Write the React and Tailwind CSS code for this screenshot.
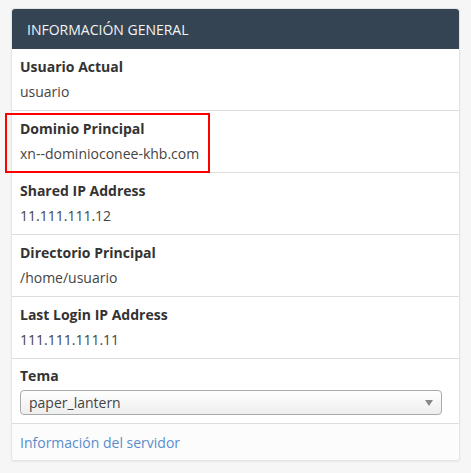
import React from 'react'

const rows = [
  { label: 'Usuario Actual', value: 'usuario' },
  { label: 'Dominio Principal', value: 'xn--dominioconee-khb.com', marked: true },
  { label: 'Shared IP Address', value: '11.111.111.12' },
  { label: 'Directorio Principal', value: '/home/usuario' },
  { label: 'Last Login IP Address', value: '111.111.111.11' },
]

export default function App() {
  return (
    <div className="min-h-[473px] w-[471px] bg-[#f6f6f6] pt-[8px] pl-[11px] font-['Open_Sans',sans-serif] text-[14px] text-[#333]">
      <div className="relative w-[449px] rounded-[3px] border border-[#e4e4e4] bg-white shadow-[0_1px_2px_rgba(0,0,0,0.06)]">
        {/* heading */}
        <div className="flex h-[40px] items-center rounded-t-[3px] bg-[#354452] px-[15px] text-[14px] uppercase text-[#f2f4f6]">
          Información General
        </div>

        {rows.map((r) => (
          <div key={r.label} className="relative border-b border-[#dddddd] px-[8px] pt-[8px] pb-[8px]">
            <div className="h-[20px] leading-[20px] font-bold text-[#333]">{r.label}</div>
            <div className="mt-[5px] h-[20px] leading-[20px] text-[#444]">{r.value}</div>
            {r.marked && (
              <div className="pointer-events-none absolute left-[-7px] top-[2px] h-[60px] w-[205px] border-2 border-[#ff0000]" />
            )}
          </div>
        ))}

        {/* theme selector */}
        <div className="border-b border-[#dddddd] px-[8px] pt-[7px] pb-[8px]">
          <div className="h-[20px] leading-[20px] font-bold text-[#333]">Tema</div>
          <div className="relative mt-[4px] flex h-[25px] w-[422px] items-center rounded-[4px] border border-[#aaaaaa] bg-gradient-to-b from-white to-[#eeeeee] pl-[8px] text-[#444]">
            paper_lantern
            <span className="absolute right-[8px] top-[9px] h-0 w-0 border-x-[4px] border-t-[6px] border-x-transparent border-t-[#888]" />
          </div>
        </div>

        {/* footer */}
        <div className="flex h-[36px] items-center rounded-b-[3px] bg-[#fcfcfc] px-[8px] text-[#5a8ccb]">
          Información del servidor
        </div>
      </div>
    </div>
  )
}
